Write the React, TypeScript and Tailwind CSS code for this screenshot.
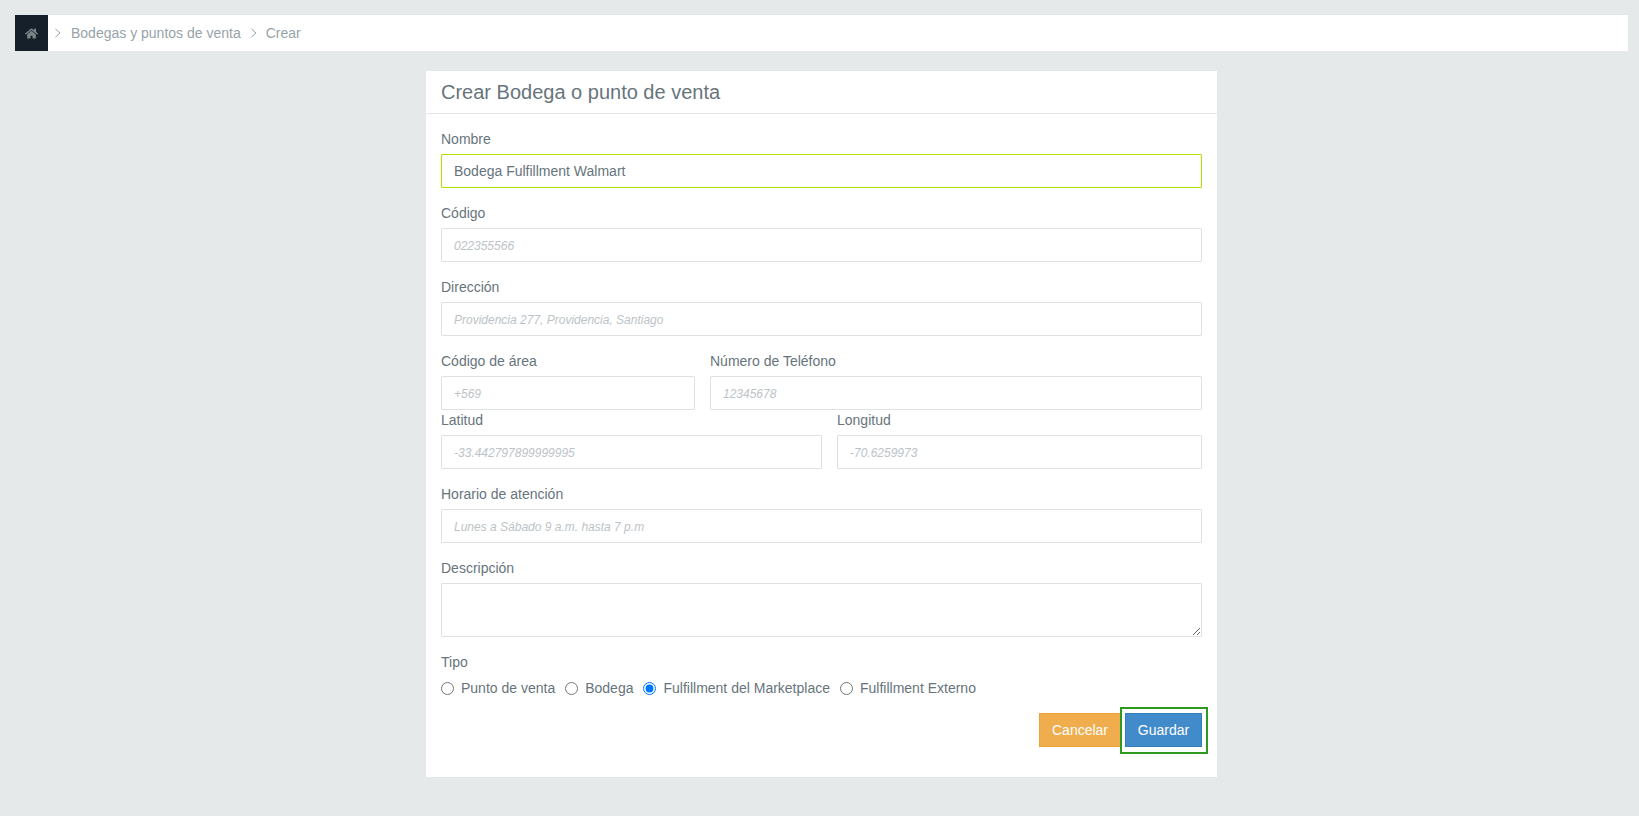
import { FaHome } from 'react-icons/fa';

const inputCls =
  'block w-full h-[34px] rounded-[1px] border border-[#dde2e3] bg-white px-3 text-[14px] text-[#67747c] outline-none placeholder:italic placeholder:text-[12px] placeholder:text-[#bcc3c7]';
const labelCls = 'block h-[20px] leading-[20px] mb-[5px] text-[14px] text-[#67747c]';

function Field({ label, placeholder, className }: { label: string; placeholder: string; className?: string }) {
  return (
    <div className={className}>
      <label className={labelCls}>{label}</label>
      <input className={inputCls} placeholder={placeholder} />
    </div>
  );
}

function Crumb() {
  return (
    <svg width="8" height="10" viewBox="0 0 8 10" className="text-[#98a3a9]" fill="none" stroke="currentColor" strokeWidth="1">
      <path d="M1.5 1l4.5 4-4.5 4" />
    </svg>
  );
}

function Radio({ label, checked, className }: { label: string; checked?: boolean; className?: string }) {
  return (
    <label className={'flex items-center text-[14px] text-[#67747c] ' + (className ?? '')}>
      <input type="radio" name="tipo" defaultChecked={checked} className="m-0 mr-[7px] h-[13px] w-[13px]" />
      {label}
    </label>
  );
}

export default function App() {
  return (
    <div className="min-h-[816px] bg-[#e5e9ea] pl-[15px] pr-[11px] pt-[15px] font-['Liberation_Sans',Arial,sans-serif]">
      {/* Breadcrumb */}
      <div className="flex h-[36px] items-center bg-white text-[14px] text-[#98a3a9]">
        <div className="flex h-full w-[33px] items-center justify-center bg-[#15202a] text-[#7d8488]">
          <FaHome size={13} />
        </div>
        <span className="ml-[6px] mr-[9px]"><Crumb /></span>
        <span>Bodegas y puntos de venta</span>
        <span className="ml-[9px] mr-[8px]"><Crumb /></span>
        <span>Crear</span>
      </div>

      {/* Card */}
      <div className="mx-auto mt-[20px] h-[706px] w-[791px] bg-white">
        <div className="h-[43px] border-b border-[#e3e7e8] px-[15px] text-[20px] leading-[42px] text-[#67747c]">
          Crear Bodega o punto de venta
        </div>
        <div className="px-[15px] pt-[15px]">
          <div className="mb-[15px]">
            <label className={labelCls}>Nombre</label>
            <input className={inputCls + ' !border-[#aee000]'} defaultValue="Bodega Fulfillment Walmart" />
          </div>
          <Field className="mb-[15px]" label="Código" placeholder="022355566" />
          <Field className="mb-[15px]" label="Dirección" placeholder="Providencia 277, Providencia, Santiago" />
          <div className="flex gap-[15px]">
            <Field className="w-[254px]" label="Código de área" placeholder="+569" />
            <Field className="flex-1" label="Número de Teléfono" placeholder="12345678" />
          </div>
          <div className="mb-[15px] flex gap-[15px]">
            <Field className="w-[381px]" label="Latitud" placeholder="-33.442797899999995" />
            <Field className="flex-1" label="Longitud" placeholder="-70.6259973" />
          </div>
          <Field className="mb-[15px]" label="Horario de atención" placeholder="Lunes a Sábado 9 a.m. hasta 7 p.m" />
          <div>
            <label className={labelCls}>Descripción</label>
            <textarea className="block h-[54px] w-full rounded-[1px] border border-[#dde2e3] bg-white px-3 text-[14px] outline-none" />
          </div>
          <label className={labelCls + ' mt-[15px]'}>Tipo</label>
          <div className="mt-[6px] flex h-[20px] items-center">
            <Radio label="Punto de venta" />
            <Radio className="ml-[10px]" label="Bodega" />
            <Radio className="ml-[10px]" label="Fulfillment del Marketplace" checked />
            <Radio className="ml-[10px]" label="Fulfillment Externo" />
          </div>
          <div className="mt-[15px] flex justify-end gap-[4px]">
            <button className="h-[34px] w-[82px] border border-[#eea236] bg-[#f0ad4e] text-[14px] text-white">Cancelar</button>
            <div className="relative">
              <button className="block h-[34px] w-[77px] border border-[#357ebd] bg-[#428bca] text-[14px] text-white">Guardar</button>
              <div className="absolute -left-[5px] -right-[6px] -top-[6px] -bottom-[7px] border-2 border-[#2e9a1f]" />
            </div>
          </div>
        </div>
      </div>
    </div>
  );
}
